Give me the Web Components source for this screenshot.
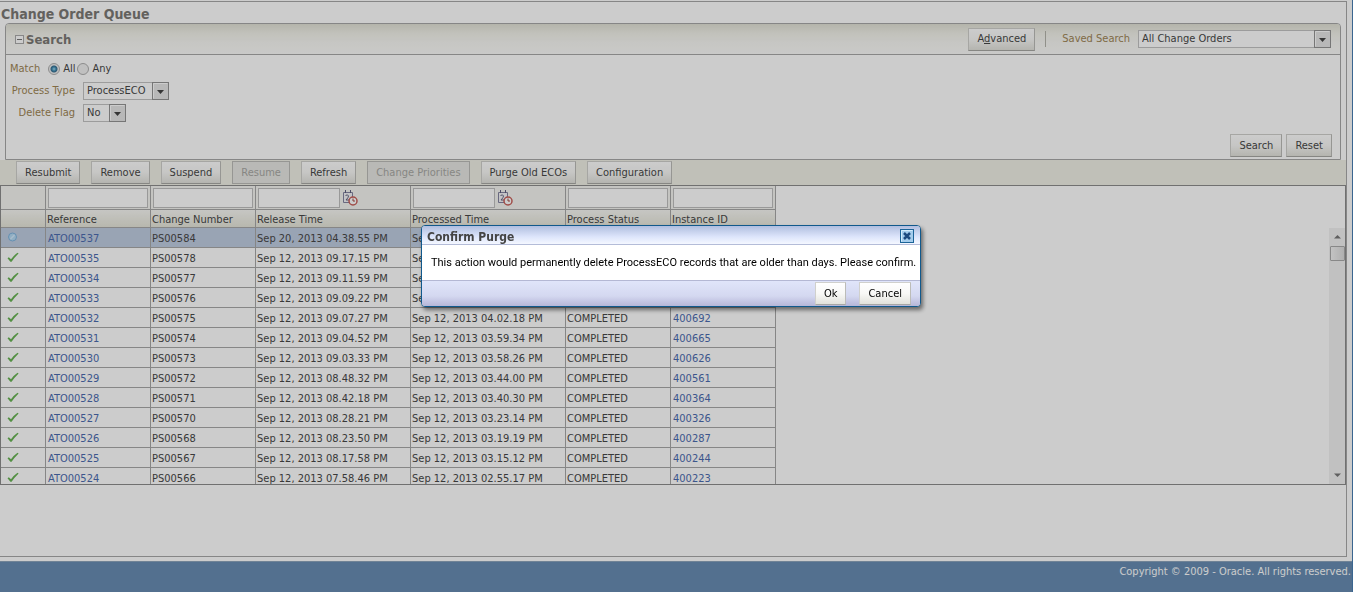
<!DOCTYPE html>
<html lang="en">
<head>
<meta charset="utf-8">
<title>Change Order Queue</title>
<style>
  html, body {
    height: 100%;
  }
  body {
    margin: 0;
    background: #fff;
    color: #484848;
    font: 11px/14px "DejaVu Sans Condensed", Tahoma, "DejaVu Sans", sans-serif;
  }
</style>
</head>
<body>
<queue-page></queue-page>

<script>
// A push button with a grey gradient face
class PushButton extends HTMLElement {
  constructor() {
    super();
    this.attachShadow({ mode: 'open' });
    this.shadowRoot.innerHTML = `
      <style>
        :host {
          display: inline-block;
        }
        button {
          display: block;
          box-sizing: border-box;
          height: 23px;
          margin: 0;
          padding: 0 8px;
          border: 1px solid #d0d0cc;
          border-bottom-color: #a8a8a4;
          border-right-color: #bcbcb8;
          background: linear-gradient(#fff, #f8f8f6 50%, #e2e2dc);
          color: inherit;
          font: inherit;
          white-space: nowrap;
        }
        button:disabled {
          border-color: #bcbcb8;
          background: #e8e8e4;
          color: #a8a8a4;
        }
      </style>
      <button type="button"><slot></slot></button>
    `;
    this.shadowRoot.querySelector('button').disabled = this.hasAttribute('disabled');
  }
}

// A label with a drop-down list beside it
class SelectField extends HTMLElement {
  connectedCallback() {
    this.attachShadow({ mode: 'open' });
    const options = this.getAttribute('options').split('|');

    this.shadowRoot.innerHTML = `
      <style>
        :host {
          display: flex;
          align-items: center;
          gap: 8px;
        }
        label {
          width: var(--label-width, auto);
          color: #a08656;
          text-align: right;
          white-space: nowrap;
        }
        .box {
          position: relative;
          width: var(--select-width, auto);
        }
        select {
          display: block;
          box-sizing: border-box;
          width: 100%;
          height: 18px;
          margin: 0;
          padding: 0 22px 0 3px;
          border: 1px solid #c4c4c4;
          border-radius: 0;
          background: #fff;
          appearance: none;
          color: inherit;
          font: inherit;
        }
        svg {
          position: absolute;
          top: 0;
          right: 0;
          pointer-events: none;
        }
      </style>
      <label for="list">${this.getAttribute('label')}</label>
      <div class="box">
        <select id="list">${options.map(o => `<option>${o}</option>`).join('')}</select>
        <svg width="17" height="18" viewBox="0 0 17 18">
          <rect x=".5" y=".5" width="16" height="17" fill="#e6e6e6" stroke="#949494"/>
          <path d="M1.500 16.500V1.500H15.500" fill="none" stroke="#fff"/>
          <path d="M5 8h7l-3.500 4z" fill="#444"/>
        </svg>
      </div>
    `;
  }
}

// The collapsible search box
class SearchPanel extends HTMLElement {
  constructor() {
    super();
    this.attachShadow({ mode: 'open' });
    this.shadowRoot.innerHTML = `
      <style>
        :host {
          display: block;
          border: 1px solid #a8a8a8;
          border-radius: 4px 4px 0 0;
        }
        header {
          display: flex;
          align-items: center;
          height: 30px;
          padding: 0 9px;
          border-bottom: 1px solid #a8a8a8;
          border-radius: 3px 3px 0 0;
          background: linear-gradient(#e2e2d6, #f2f2ea 30%, #f8f8f4 60%, #fcfcfa);
        }
        h2 {
          flex: 1;
          margin: 0 0 0 2px;
          padding-top: 2px;
          color: #7c7a76;
          font-size: 13px;
          line-height: 16px;
        }
        .divider {
          width: 1px;
          height: 16px;
          margin: 0 16px 0 10px;
          background: #b4b4ac;
        }
        form {
          display: flex;
          flex-direction: column;
          gap: 4px;
          padding: 5px 8px 2px 4px;
        }
        .match {
          display: flex;
          align-items: center;
          height: 18px;
        }
        .match > span {
          margin-right: 8px;
          color: #a08656;
        }
        .match label {
          display: flex;
          align-items: center;
          gap: 3px;
          margin-right: 2px;
        }
        input {
          box-sizing: border-box;
          width: 12px;
          height: 12px;
          margin: 0;
          border: 1px solid #b0b0b0;
          border-radius: 50%;
          background: #f0f0f0;
          appearance: none;
        }
        input:checked {
          background: radial-gradient(circle at 5px 5px, #a8dcf0 0, #3c8bb2 2px, #3c6f90 3px, #f0f0f0 4px);
        }
        .fields {
          display: flex;
          flex-direction: column;
          gap: 4px;
          --label-width: 65px;
        }
        .saved {
          --select-width: 193px;
        }
        .actions {
          display: flex;
          justify-content: flex-end;
          gap: 4px;
          margin-top: 8px;
        }
      </style>
      <header>
        <svg width="9" height="9" viewBox="0 0 9 9">
          <rect x=".5" y=".5" width="8" height="8" fill="#fff" stroke="#aaa"/>
          <path d="M2 4.500h5" stroke="#777"/>
        </svg>
        <h2>Search</h2>
        <push-button>A<u>d</u>vanced</push-button>
        <div class="divider"></div>
        <select-field class="saved" label="Saved Search" options="All Change Orders"></select-field>
      </header>
      <form>
        <div class="match" role="radiogroup" aria-labelledby="match">
          <span id="match">Match</span>
          <label><input type="radio" name="match" checked>All</label>
          <label><input type="radio" name="match">Any</label>
        </div>
        <div class="fields">
          <select-field label="Process Type" options="ProcessECO"></select-field>
          <select-field label="Delete Flag" options="No|Yes"></select-field>
        </div>
        <div class="actions">
          <push-button>Search</push-button>
          <push-button>Reset</push-button>
        </div>
      </form>
    `;
  }
}

// The bar of actions over the table
class ActionBar extends HTMLElement {
  constructor() {
    super();
    this.attachShadow({ mode: 'open' });
    this.shadowRoot.innerHTML = `
      <style>
        :host {
          display: flex;
          gap: 11px;
          box-sizing: border-box;
          height: 25px;
          padding: 1px 16px;
          background: #f1f1e7;
        }
      </style>
      <slot></slot>
    `;
  }
}

const CHECK_ICON = `
  <svg width="12" height="11" viewBox="0 0 12 11">
    <path d="M.500 6.300 1.800 5.200 4 7.200Q7 3.200 10.500.8L11.600 1.400Q7.600 5.200 4.600 9.800H3.400Z" fill="#68b454"/>
  </svg>`;

const PENDING_ICON = `
  <svg width="12" height="11" viewBox="0 0 12 11">
    <circle cx="5.500" cy="5" r="4" fill="#b4daf4" stroke="#80b4de"/>
    <path d="M3.500 7 7.500 3" stroke="#d4ecff" stroke-width="1.500"/>
  </svg>`;

const CALENDAR_ICON = `
  <svg width="16" height="16" viewBox="0 0 16 16">
    <path d="M1.500 2.500h9v10h-9z" fill="#f4f4f8" stroke="#8484a0"/>
    <path d="M3.500 0v3M8.500 0v3" stroke="#606080"/>
    <path d="M3.500 5.500q2.500-1.500 3 .5 0 1.500-2.500 4h3" fill="none" stroke="#666680"/>
    <circle cx="11" cy="11" r="4" fill="#fff" stroke="#c8605a" stroke-width="1.500"/>
    <path d="M11 8.500v2.500h2" fill="none" stroke="#a84840"/>
  </svg>`;

const COLUMNS = [
  { name: 'Reference', width: 105 },
  { name: 'Change Number', width: 105 },
  { name: 'Release Time', width: 155, date: true },
  { name: 'Processed Time', width: 155, date: true },
  { name: 'Process Status', width: 105 },
  { name: 'Instance ID', width: 105 }
];

const ROWS = [
  ['ATO00537', 'PS00584', 'Sep 20, 2013 04.38.55 PM', 'Sep', '', ''],
  ['ATO00535', 'PS00578', 'Sep 12, 2013 09.17.15 PM', 'Sep', '', ''],
  ['ATO00534', 'PS00577', 'Sep 12, 2013 09.11.59 PM', 'Sep', '', ''],
  ['ATO00533', 'PS00576', 'Sep 12, 2013 09.09.22 PM', 'Sep', '', ''],
  ['ATO00532', 'PS00575', 'Sep 12, 2013 09.07.27 PM', 'Sep 12, 2013 04.02.18 PM', 'COMPLETED', '400692'],
  ['ATO00531', 'PS00574', 'Sep 12, 2013 09.04.52 PM', 'Sep 12, 2013 03.59.34 PM', 'COMPLETED', '400665'],
  ['ATO00530', 'PS00573', 'Sep 12, 2013 09.03.33 PM', 'Sep 12, 2013 03.58.26 PM', 'COMPLETED', '400626'],
  ['ATO00529', 'PS00572', 'Sep 12, 2013 08.48.32 PM', 'Sep 12, 2013 03.44.00 PM', 'COMPLETED', '400561'],
  ['ATO00528', 'PS00571', 'Sep 12, 2013 08.42.18 PM', 'Sep 12, 2013 03.40.30 PM', 'COMPLETED', '400364'],
  ['ATO00527', 'PS00570', 'Sep 12, 2013 08.28.21 PM', 'Sep 12, 2013 03.23.14 PM', 'COMPLETED', '400326'],
  ['ATO00526', 'PS00568', 'Sep 12, 2013 08.23.50 PM', 'Sep 12, 2013 03.19.19 PM', 'COMPLETED', '400287'],
  ['ATO00525', 'PS00567', 'Sep 12, 2013 08.17.58 PM', 'Sep 12, 2013 03.15.12 PM', 'COMPLETED', '400244'],
  ['ATO00524', 'PS00566', 'Sep 12, 2013 07.58.46 PM', 'Sep 12, 2013 02.55.17 PM', 'COMPLETED', '400223']
];

// The table of change orders, with a filter box over each column
class QueueTable extends HTMLElement {
  constructor() {
    super();
    this.attachShadow({ mode: 'open' });
    this.shadowRoot.innerHTML = `
      <style>
        :host {
          display: flex;
          justify-content: space-between;
          box-sizing: border-box;
          max-height: 300px;
          overflow: hidden;
          border: 1px solid #8c8c8c;
        }
        table {
          table-layout: fixed;
          width: 775px;
          border-collapse: separate;
          border-spacing: 0;
        }
        th, td {
          box-sizing: border-box;
          overflow: hidden;
          padding: 2px 0 0 1px;
          border-right: 1px solid #a8a8a8;
          border-bottom: 1px solid #a8a8a8;
          font-weight: normal;
          text-align: left;
          white-space: nowrap;
        }
        .filters td {
          height: 24px;
          padding: 0 0 0 2px;
          background: #f6f6f2;
        }
        .filter {
          display: flex;
          align-items: center;
          gap: 2px;
        }
        input {
          box-sizing: border-box;
          width: 100px;
          height: 20px;
          margin: 0;
          padding: 0 2px;
          border: 1px solid #c0c0c0;
          background: #fff;
          font: inherit;
        }
        .date input {
          width: 82px;
        }
        th {
          height: 18px;
          background: linear-gradient(#f8f8f4, #e6e6da);
        }
        tbody td {
          height: 20px;
        }
        tbody td:first-child {
          padding: 0 0 0 6px;
        }
        tbody tr:first-child td {
          background: #c0cde2;
        }
        tbody svg {
          display: block;
        }
        a {
          padding-left: 1px;
          color: #4c6cb0;
          text-decoration: none;
        }
        .scroll {
          display: flex;
          flex-direction: column;
          align-items: center;
          width: 16px;
          margin-top: 42px;
          background: #f2f2f2;
        }
        .thumb {
          box-sizing: border-box;
          width: 15px;
          height: 15px;
          border: 1px solid #aaa;
          border-radius: 1px;
          background: linear-gradient(90deg, #f4f4f4, #dcdcdc);
        }
        .track {
          flex: 1;
        }
      </style>
      <table>
        <colgroup>
          <col style="width: 45px">
          ${COLUMNS.map(c => `<col style="width: ${c.width}px">`).join('')}
        </colgroup>
        <thead>
          <tr class="filters"><td></td>${COLUMNS.map(this._filter).join('')}</tr>
          <tr><th></th>${COLUMNS.map(c => `<th scope="col">${c.name}</th>`).join('')}</tr>
        </thead>
        <tbody>${ROWS.map(this._row).join('')}</tbody>
      </table>
      <div class="scroll">
        <svg width="16" height="18" viewBox="0 0 16 18"><path d="M5 10.500h7L8.500 7z" fill="#777"/></svg>
        <div class="thumb"></div>
        <div class="track"></div>
        <svg width="16" height="18" viewBox="0 0 16 18"><path d="M5 7.500h7L8.500 11z" fill="#777"/></svg>
      </div>
    `;
  }

  _filter(column) {
    return `<td><div class="filter ${column.date ? 'date' : ''}">
      <input type="text" aria-label="${column.name}">${column.date ? CALENDAR_ICON : ''}
    </div></td>`;
  }

  _row([reference, number, released, processed, status, instance], index) {
    return `<tr>
      <td>${index === 0 ? PENDING_ICON : CHECK_ICON}</td>
      <td><a href="#">${reference}</a></td>
      <td>${number}</td>
      <td>${released}</td>
      <td>${processed}</td>
      <td>${status}</td>
      <td>${instance ? `<a href="#">${instance}</a>` : ''}</td>
    </tr>`;
  }
}

// A modal dialog over a dimmed page; the buttons go in the "actions" slot
class ConfirmDialog extends HTMLElement {
  constructor() {
    super();
    this.attachShadow({ mode: 'open' });
    this.shadowRoot.innerHTML = `
      <style>
        :host {
          position: fixed;
          inset: 0;
          display: flex;
          justify-content: center;
          align-items: flex-start;
          box-sizing: border-box;
          padding: 225px 11px 0 0;
          background: rgba(0, 0, 0, .2);
          color: #000;
        }
        dialog {
          position: static;
          box-sizing: border-box;
          width: 500px;
          margin: 0;
          padding: 0;
          overflow: hidden;
          border: 1px solid #11598c;
          border-radius: 4px;
          background: #fff;
          color: inherit;
          box-shadow: 2px 3px 4px rgba(0, 0, 0, .5);
        }
        header {
          display: flex;
          justify-content: space-between;
          align-items: center;
          height: 17px;
          padding: 1px 6px 0 5px;
          border-bottom: 1px solid #b4bcd8;
          background: linear-gradient(#b0bedf, #dde5fb 60%, #f4f7ff);
        }
        h2 {
          margin: 0;
          padding-top: 2px;
          color: #444;
          font-size: 12px;
          line-height: 16px;
        }
        .close {
          display: block;
          width: 14px;
          height: 14px;
          padding: 0;
          border: 0;
          background: none;
        }
        .close svg {
          display: block;
        }
        p {
          margin: 0;
          padding: 11px 4px 10px 9px;
          font-family: Roboto, Tahoma, sans-serif;
          white-space: nowrap;
        }
        footer {
          display: flex;
          justify-content: flex-end;
          gap: 13px;
          padding: 1px 9px;
          border-top: 1px solid #b4b8d4;
          background: linear-gradient(#e0e5fa, #d4d8f0 60%, #b6b6d8);
        }
      </style>
      <dialog open aria-labelledby="title">
        <header>
          <h2 id="title">${this.getAttribute('heading')}</h2>
          <button class="close" type="button" aria-label="Close">
            <svg width="14" height="14" viewBox="0 0 14 14">
              <rect x=".5" y=".5" width="13" height="13" fill="#a4ccec" stroke="#1c6498"/>
              <path d="M1.500 12.500v-11h11" fill="none" stroke="#d4ecfc"/>
              <path d="M4 4l6 6M10 4l-6 6" stroke="#1c4a80" stroke-width="2.500"/>
            </svg>
          </button>
        </header>
        <p><slot></slot></p>
        <footer><slot name="actions"></slot></footer>
      </dialog>
    `;
  }
}

class QueuePage extends HTMLElement {
  constructor() {
    super();
    this.attachShadow({ mode: 'open' });
    this.shadowRoot.innerHTML = `
      <style>
        :host {
          display: flex;
          flex-direction: column;
          box-sizing: border-box;
          min-height: 100%;
          padding-top: 1px;
          border-right: 1px solid #4a80b4;
        }
        main {
          flex: 1;
          margin: 0 5px 4px 0;
          border: solid #a8a8a8;
          border-width: 1px 1px 1px 0;
        }
        h1 {
          margin: 0;
          padding: 3px 0 0 1px;
          color: #7c7a76;
          font-size: 14px;
          line-height: 18px;
        }
        search-panel {
          margin: 0 5px;
        }
        .page-footer {
          box-sizing: border-box;
          height: 31px;
          padding: 3px 1px;
          border-top: 1px solid #8ca4bc;
          background: #688db3;
          color: #fff;
          text-align: right;
        }
      </style>
      <main>
        <h1>Change Order Queue</h1>
        <search-panel></search-panel>
        <action-bar>
          <push-button>Resubmit</push-button>
          <push-button>Remove</push-button>
          <push-button>Suspend</push-button>
          <push-button disabled>Resume</push-button>
          <push-button>Refresh</push-button>
          <push-button disabled>Change Priorities</push-button>
          <push-button>Purge Old ECOs</push-button>
          <push-button>Configuration</push-button>
        </action-bar>
        <queue-table></queue-table>
      </main>
      <footer class="page-footer">Copyright © 2009 - Oracle. All rights reserved.</footer>
      <confirm-dialog heading="Confirm Purge">
        This action would permanently delete ProcessECO records that are older than days. Please confirm.
        <push-button slot="actions">Ok</push-button>
        <push-button slot="actions">Cancel</push-button>
      </confirm-dialog>
    `;
  }
}

// Register the parts first, the page last
customElements.define('push-button', PushButton);
customElements.define('select-field', SelectField);
customElements.define('search-panel', SearchPanel);
customElements.define('action-bar', ActionBar);
customElements.define('queue-table', QueueTable);
customElements.define('confirm-dialog', ConfirmDialog);
customElements.define('queue-page', QueuePage);
</script>
</body>
</html>
